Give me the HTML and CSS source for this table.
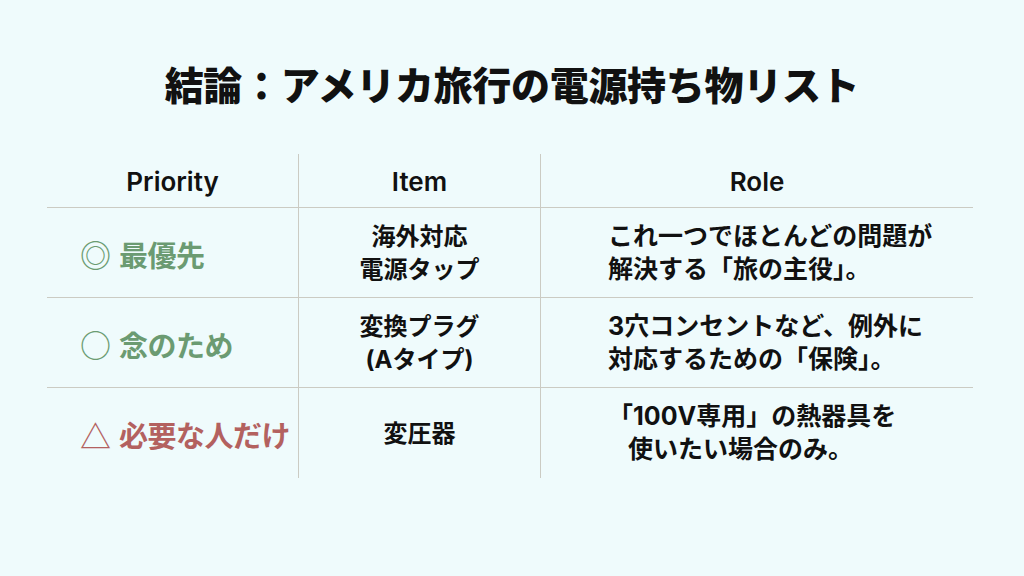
FILE: index.html
```html
<!DOCTYPE html>
<html lang="ja">
<head>
<meta charset="utf-8">
<link rel="stylesheet" href="styles.css">
</head>
<body>
<main class="slide">
  <h1 class="title">結論：アメリカ旅行の電源持ち物リスト</h1>
  <div class="table">
    <div class="cell head c1">Priority</div>
    <div class="cell head c2">Item</div>
    <div class="cell head c3">Role</div>

    <div class="cell prio green c1"><span class="mark">◎</span>最優先</div>
    <div class="cell item c2">海外対応<br>電源タップ</div>
    <div class="cell role c3"><div>これ一つでほとんどの問題が<br>解決する「旅の主役」。</div></div>

    <div class="cell prio green c1"><span class="mark">○</span>念のため</div>
    <div class="cell item c2">変換プラグ<br>(Aタイプ)</div>
    <div class="cell role c3"><div>3穴コンセントなど、例外に<br>対応するための「保険」。</div></div>

    <div class="cell prio red c1 last"><span class="mark">△</span>必要な人だけ</div>
    <div class="cell item c2 last">変圧器</div>
    <div class="cell role c3 last"><div>「100V専用」の熱器具を<br><span class="indent">使いたい場合のみ。</span></div></div>
  </div>
</main>
</body>
</html>
```
FILE: styles.css
```css
html, body {
  margin: 0;
  padding: 0;
  background: #effbfc;
}
body {
  font-family: Inter, "Noto Sans CJK JP", sans-serif;
  color: #111;
}
.slide {
  width: 1024px;
  height: 576px;
  display: flex;
  flex-direction: column;
  box-sizing: border-box;
  padding-top: 58px;
}
.title {
  margin: 0;
  height: 50px;
  line-height: 50px;
  font-size: 39px;
  font-weight: 900;
  text-align: center;
  letter-spacing: -0.3px;
  color: #111;
  font-family: "Noto Sans CJK JP", sans-serif;
}
.table {
  margin: 46px 0 0 47px;
  width: 926px;
  display: grid;
  grid-template-columns: 252px 242px 432px;
  grid-template-rows: 54px 90px 90px 90px;
}
.cell {
  box-sizing: border-box;
  border-bottom: 1px solid #cbcbc3;
  display: flex;
  align-items: center;
}
.cell.last {
  border-bottom: none;
}
.c1, .c2 {
  border-right: 1px solid #cbcbc3;
}
.head {
  justify-content: center;
  font-size: 26px;
  font-weight: 600;
  padding-top: 2px;
}
.prio {
  padding-left: 33px;
  font-size: 29px;
  font-weight: 700;
  font-family: "Noto Sans CJK JP", sans-serif;
  padding-top: 2px;
  letter-spacing: -0.5px;
}
.mark {
  font-size: 31px;
  font-weight: 500;
  margin-right: 8px;
  letter-spacing: 0;
}
.green { color: #6b9b72; }
.red { color: #b3615f; }
.item {
  justify-content: center;
  text-align: center;
  font-size: 24px;
  font-weight: 700;
  line-height: 33px;
}
.role {
  padding-left: 67px;
  font-size: 25px;
  font-weight: 700;
  line-height: 33px;
  text-align: left;
}
.indent {
  padding-left: 20px;
}
```
